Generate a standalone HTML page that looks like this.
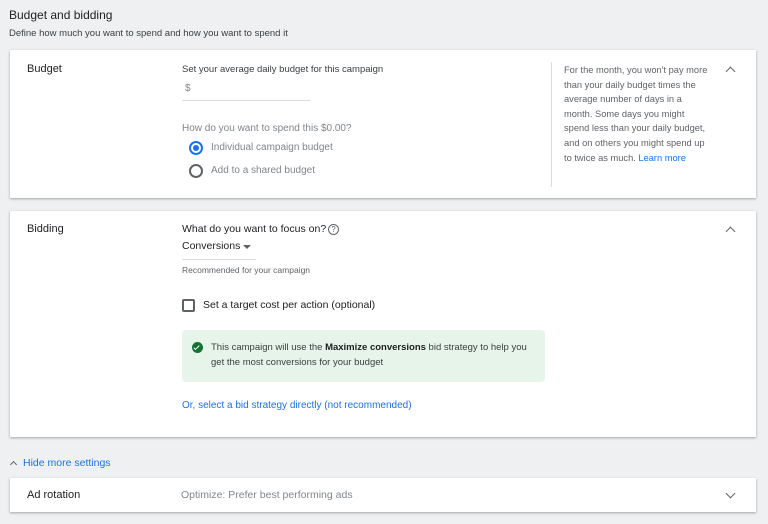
<!DOCTYPE html>
<html><head><meta charset="utf-8"><style>
*{margin:0;padding:0;box-sizing:border-box}
body{width:768px;height:524px;background:#eef0f2;font-family:"Liberation Sans",Arial,sans-serif;color:#3c4043;position:relative;overflow:hidden}
.a{position:absolute;white-space:nowrap}
.card{position:absolute;left:10px;width:746px;background:#fff;box-shadow:0 1px 2px rgba(60,64,67,.3),0 1px 3px rgba(60,64,67,.15)}
.lnk{color:#1a73e8}
.chev{position:absolute;width:7px;height:7px;border-left:1.6px solid #5f6368;border-top:1.6px solid #5f6368;transform:rotate(45deg)}
.chevd{transform:rotate(225deg)}
</style></head><body>
<div class="a" style="left:9px;top:8px;font-size:12px;color:#202124">Budget and bidding</div>
<div class="a" style="left:9px;top:28px;font-size:9.5px;color:#3c4043">Define how much you want to spend and how you want to spend it</div>

<div class="card" style="top:50px;height:148px">
  <div class="a" style="left:17px;top:13px;font-size:11px;color:#202124">Budget</div>
  <div class="a" style="left:172px;top:14px;font-size:9.5px">Set your average daily budget for this campaign</div>
  <div class="a" style="left:175px;top:33px;font-size:10px;color:#80868b">$</div>
  <div style="position:absolute;left:172px;top:50px;width:128px;height:1px;background:#dadce0"></div>
  <div class="a" style="left:172px;top:73px;font-size:10px;color:#80868b">How do you want to spend this $0.00?</div>
  <div style="position:absolute;left:179px;top:91px;width:14px;height:14px;border:2px solid #1a73e8;border-radius:50%"></div>
  <div style="position:absolute;left:183px;top:95px;width:6px;height:6px;background:#1a73e8;border-radius:50%"></div>
  <div class="a" style="left:201px;top:92px;font-size:10px;color:#80868b">Individual campaign budget</div>
  <div style="position:absolute;left:179px;top:114px;width:14px;height:14px;border:2px solid #5f6368;border-radius:50%"></div>
  <div class="a" style="left:201px;top:115px;font-size:10px;color:#80868b">Add to a shared budget</div>
  <div style="position:absolute;left:541px;top:12px;width:1px;height:125px;background:#dadce0"></div>
  <div style="position:absolute;left:554px;top:13px;width:146px;font-size:9.3px;line-height:14.6px;color:#5f6368">For the month, you won't pay more than your daily budget times the average number of days in a month. Some days you might spend less than your daily budget, and on others you might spend up to twice as much. <span class="lnk">Learn more</span></div>
  <div class="chev" style="left:717px;top:18px"></div>
</div>

<div class="card" style="top:211px;height:226px">
  <div class="a" style="left:17px;top:12px;font-size:11px;color:#202124">Bidding</div>
  <div class="a" style="left:172px;top:12px;font-size:10.5px;color:#202124">What do you want to focus on?</div>
  <div style="position:absolute;left:318px;top:13px;width:11px;height:11px;border:1px solid #5f6368;border-radius:50%;font-size:8px;line-height:9px;text-align:center;color:#5f6368">?</div>
  <div class="a" style="left:172px;top:29px;font-size:10.5px;color:#202124">Conversions</div>
  <div style="position:absolute;left:233px;top:34px;border-left:4px solid transparent;border-right:4px solid transparent;border-top:4px solid #5f6368"></div>
  <div style="position:absolute;left:172px;top:48px;width:74px;height:1px;background:#dadce0"></div>
  <div class="a" style="left:172px;top:54px;font-size:8.5px;color:#5f6368">Recommended for your campaign</div>
  <div style="position:absolute;left:172px;top:88px;width:13px;height:13px;border:2px solid #5f6368;border-radius:2px"></div>
  <div class="a" style="left:193px;top:88px;font-size:10.5px;color:#202124">Set a target cost per action (optional)</div>
  <div style="position:absolute;left:172px;top:119px;width:363px;height:52px;background:#e6f4ea;border-radius:4px"></div>
  <div style="position:absolute;left:182px;top:131px;width:11px;height:11px;background:#137333;border-radius:50%"></div>
  <div style="position:absolute;left:185px;top:133px;width:3px;height:6px;border-right:1.5px solid #fff;border-bottom:1.5px solid #fff;transform:rotate(45deg)"></div>
  <div style="position:absolute;left:201px;top:129px;width:322px;font-size:9.5px;line-height:15px;color:#3c4043">This campaign will use the <b style="color:#202124">Maximize conversions</b> bid strategy to help you get the most conversions for your budget</div>
  <div class="a lnk" style="left:172px;top:189px;font-size:10px">Or, select a bid strategy directly (not recommended)</div>
  <div class="chev" style="left:717px;top:17px"></div>
</div>

<div class="chev" style="left:11px;top:462px;width:5px;height:5px"></div>
<div class="a lnk" style="left:23px;top:457px;font-size:10.5px">Hide more settings</div>

<div class="card" style="top:478px;height:34px">
  <div class="a" style="left:17px;top:11px;font-size:11px;color:#202124">Ad rotation</div>
  <div class="a" style="left:171px;top:11px;font-size:10.5px;color:#80868b">Optimize: Prefer best performing ads</div>
  <div class="chev chevd" style="left:717px;top:12px"></div>
</div>
</body></html>
